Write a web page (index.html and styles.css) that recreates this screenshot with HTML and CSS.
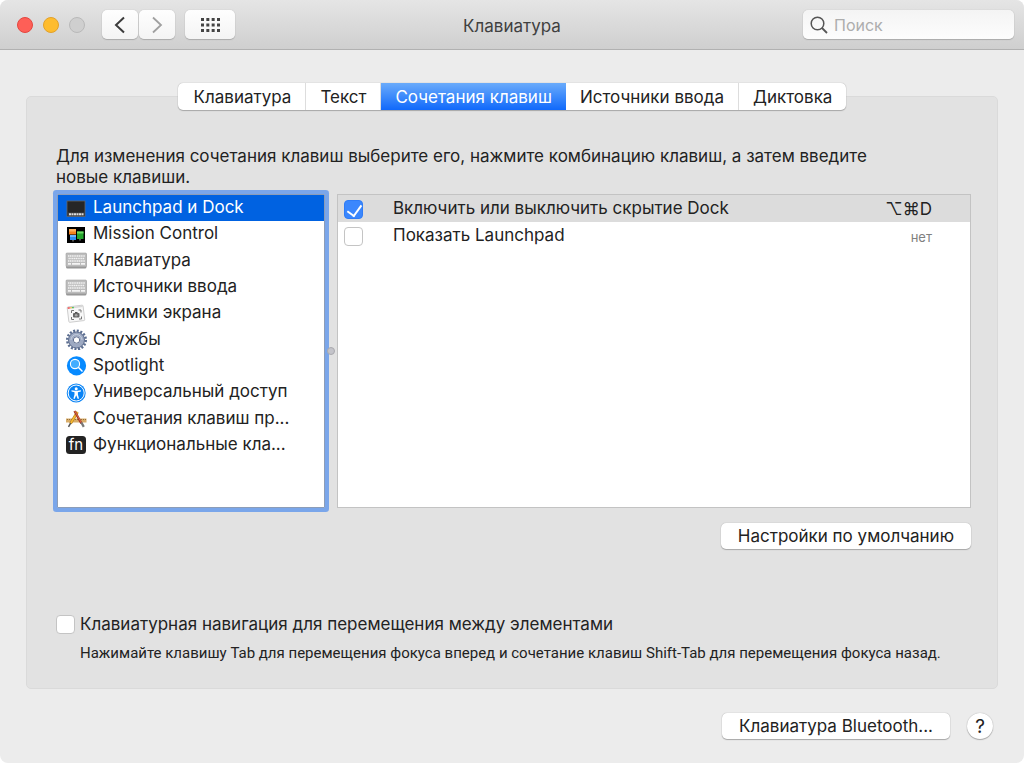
FILE: index.html
```
<!DOCTYPE html>
<html lang="ru">
<head>
    <meta charset="UTF-8">
    <meta name="viewport" content="width=device-width, initial-scale=1.0">
    <title>Клавиатура</title>
    <link rel="stylesheet" href="styles.css">
</head>
<body>

<div class="window">
    <header class="titlebar">
        <div class="titlebar-left">
            <div class="lights">
                <button class="light red" aria-label="Закрыть"></button>
                <button class="light yellow" aria-label="Свернуть"></button>
                <button class="light off" aria-label="Развернуть" disabled></button>
            </div>
            <div class="nav">
                <button class="tool nav-btn" aria-label="Назад">
                    <svg width="12" height="18" viewBox="0 0 12 18"><path d="M10 1.500 2 9l8 7.500" fill="none" stroke="#3c3c3c" stroke-width="2"/></svg>
                </button>
                <button class="tool nav-btn" aria-label="Вперед">
                    <svg width="12" height="18" viewBox="0 0 12 18"><path d="M2 1.500 10 9l-8 7.500" fill="none" stroke="#a0a0a0" stroke-width="1.800"/></svg>
                </button>
            </div>
            <button class="tool grid-btn" aria-label="Показать все">
                <svg width="20" height="14" viewBox="0 0 20 14"><path d="M1 1.500h19M1 7h19M1 12.500h19" stroke="#444" stroke-width="3" stroke-dasharray="3 2.330"/></svg>
            </button>
        </div>
        <h1 class="title">Клавиатура</h1>
        <label class="search">
            <svg width="18" height="18" viewBox="0 0 18 18"><circle cx="7.500" cy="7.500" r="6.300" fill="none" stroke="#555" stroke-width="1.500"/><path d="m12 12 5 5" stroke="#555" stroke-width="1.800"/></svg>
            <input type="text" placeholder="Поиск" aria-label="Поиск">
        </label>
    </header>

    <main class="content">
        <div class="tabs" role="tablist">
            <button role="tab">Клавиатура</button>
            <button role="tab">Текст</button>
            <button role="tab" class="active" aria-selected="true">Сочетания клавиш</button>
            <button role="tab">Источники ввода</button>
            <button role="tab">Диктовка</button>
        </div>

        <section class="panel">
            <p class="intro">Для изменения сочетания клавиш выберите его, нажмите комбинацию клавиш, а затем введите новые клавиши.</p>

            <div class="split">
                <div class="categories">
                    <ul>
                        <li><button class="selected">
                            <svg width="22" height="22" viewBox="0 0 22 22"><rect x="2" y="4" width="18" height="15.500" fill="#262626" stroke="#666" stroke-width=".8"/><path d="M2.500 15.500h17V19h-17z" fill="#454545"/><path d="M4 17.200h14.500" stroke="#ddd" stroke-width="2" stroke-dasharray="2 .5"/></svg>
                            Launchpad и Dock</button></li>
                        <li><button>
                            <svg width="22" height="22" viewBox="0 0 22 22"><rect x="2" y="4" width="18" height="16" fill="#000"/><rect x="4" y="6" width="7" height="5.500" fill="#f58220"/><path d="M4 6h7v2.500H4z" fill="#ffb15c"/><rect x="5" y="12" width="6" height="5" fill="#2d8cf0"/><path d="M5 12h6v2H5z" fill="#6bb4ff"/><rect x="12" y="8.500" width="6.500" height="7.500" fill="#23a52c"/><path d="M12 8.500h6.500v2H12z" fill="#6bd964"/><path d="M8 17v1.500M15 16v1.500" stroke="#aaa"/></svg>
                            Mission Control</button></li>
                        <li><button>
                            <svg width="22" height="22" viewBox="0 0 22 22"><rect x="1" y="4" width="20.500" height="15.500" rx="1.500" fill="#969696"/><rect x="1" y="4" width="20.500" height="13.800" rx="1" fill="#bcbcbc" stroke="#a4a4a4" stroke-width=".6"/><path d="M3 7h17M3.500 9.500h16M3 12h17" stroke="#f4f4f4" stroke-width="1.700" stroke-dasharray="1.300 .5"/><path d="M3 14.800h3m1 0h8m1 0h4" stroke="#f4f4f4" stroke-width="1.700"/></svg>
                            Клавиатура</button></li>
                        <li><button>
                            <svg width="22" height="22" viewBox="0 0 22 22"><rect x="1" y="4" width="20.500" height="15.500" rx="1.500" fill="#969696"/><rect x="1" y="4" width="20.500" height="13.800" rx="1" fill="#bcbcbc" stroke="#a4a4a4" stroke-width=".6"/><path d="M3 7h17M3.500 9.500h16M3 12h17" stroke="#f4f4f4" stroke-width="1.700" stroke-dasharray="1.300 .5"/><path d="M3 14.800h3m1 0h8m1 0h4" stroke="#f4f4f4" stroke-width="1.700"/></svg>
                            Источники ввода</button></li>
                        <li><button>
                            <svg width="22" height="22" viewBox="0 0 22 22"><g transform="rotate(-7 11 12)"><rect x="3" y="4" width="16" height="15.500" rx="1" fill="#f7f7f7" stroke="#c5c5c5" stroke-width=".8"/><path d="M3.400 4.400h15.200V6H3.400z" fill="#d8d8d8"/><path d="M3.500 5.200h2" stroke="#f33" stroke-width="1.400"/><path d="M6 5.200h1.500" stroke="#fb3" stroke-width="1.400"/><path d="M8 5.200h1.500" stroke="#3b4" stroke-width="1.400"/></g><path d="M6.500 11V8.500H9m4.500-.5H16v2.500m.5 4V17H14m-5 .5H6.500V15" fill="none" stroke="#777"/><rect x="8" y="11" width="6.500" height="4.500" rx="1" fill="#666"/><path d="M10 10.500h2.500" stroke="#555"/><circle cx="11.200" cy="13.200" r="1.300" fill="#aaa"/></svg>
                            Снимки экрана</button></li>
                        <li><button>
                            <svg width="22" height="22" viewBox="0 0 22 22"><circle cx="11.500" cy="12" r="9.200" fill="none" stroke="#5a6d90" stroke-width="2.600" stroke-dasharray="2 1.612"/><circle cx="11.500" cy="12" r="5.800" fill="none" stroke="#9da9c2" stroke-width="4.800"/><circle cx="11.500" cy="12" r="8" fill="none" stroke="#5f6e8e"/><circle cx="11.500" cy="12" r="3.200" fill="#fff" stroke="#5f6e8e"/><path d="M6 12a5.500 5.500 0 0 1 11 0" fill="none" stroke="#c4cede"/></svg>
                            Службы</button></li>
                        <li><button>
                            <svg width="22" height="22" viewBox="0 0 22 22"><circle cx="11.500" cy="11.800" r="9.600" fill="#078aff"/><circle cx="10" cy="10" r="4.600" fill="#42adff" stroke="#fff" stroke-width="1.100"/><path d="m13.300 13.300 4.200 4.200" stroke="#fff" stroke-width="1.500"/></svg>
                            Spotlight</button></li>
                        <li><button>
                            <svg width="22" height="22" viewBox="0 0 22 22"><circle cx="11.200" cy="12" r="9.500" fill="#0a84f5"/><circle cx="11.200" cy="12" r="8" fill="none" stroke="#fff"/><circle cx="11.200" cy="7.700" r="1.500" fill="#fff"/><path d="M6.500 9.300 10 9.800h2.400l3.500-.5v1.300l-3 .6v2.400l1.100 4-1.200.4-1.600-3.700L9.600 18l-1.200-.4 1.100-4v-2.400l-3-.6z" fill="#fff"/></svg>
                            Универсальный доступ</button></li>
                        <li><button>
                            <svg width="22" height="22" viewBox="0 0 22 22"><path d="M1 11.500h20.500v4H1z" fill="#d8ad69"/><path d="M2 12.500h19" stroke="#96703b" stroke-dasharray="1 1"/><path d="M12.500 5 5.500 16.500" stroke="#b47a13" stroke-width="2.700"/><path d="M12.500 5 5.500 16.500" stroke="#f4b936" stroke-width="1.600"/><path d="m5.700 16-2.200 3.800" stroke="#555" stroke-width="1.500"/><path d="m9.500 4 7 12.500" stroke="#a03420" stroke-width="2.400"/><path d="m9.800 4 7 12.500" stroke="#e97958" stroke-width=".8"/><path d="m16.300 15.500 2.500 4.300" stroke="#777" stroke-width="2.300"/></svg>
                            Сочетания клавиш пр...</button></li>
                        <li><button>
                            <svg width="22" height="22" viewBox="0 0 22 22"><rect x="1" y="3" width="20" height="18" rx="3.500" fill="#232323"/><text x="11" y="17" text-anchor="middle" class="fn">fn</text></svg>
                            Функциональные кла...</button></li>
                    </ul>
                </div>

                <div class="divider"><span class="grip"></span></div>

                <div class="shortcuts">
                    <table>
                        <tbody>
                            <tr class="selected">
                                <td class="check"><input type="checkbox" id="hide-dock" checked></td>
                                <td><label for="hide-dock">Включить или выключить скрытие Dock</label></td>
                                <td class="key">⌥⌘D</td>
                            </tr>
                            <tr>
                                <td class="check"><input type="checkbox" id="show-launchpad"></td>
                                <td><label for="show-launchpad">Показать Launchpad</label></td>
                                <td class="key none">нет</td>
                            </tr>
                        </tbody>
                    </table>
                </div>
            </div>

            <div class="defaults">
                <button class="push">Настройки по умолчанию</button>
            </div>

            <div class="navigation">
                <input type="checkbox" id="kbd-nav" aria-describedby="kbd-hint">
                <label for="kbd-nav">Клавиатурная навигация для перемещения между элементами</label>
                <p class="hint" id="kbd-hint">Нажимайте клавишу Tab для перемещения фокуса вперед и сочетание клавиш Shift-Tab для перемещения фокуса назад.</p>
            </div>
        </section>
    </main>

    <footer class="footer">
        <button class="push">Клавиатура Bluetooth...</button>
        <button class="help" aria-label="Справка">?</button>
    </footer>
</div>

</body>
</html>
```
FILE: styles.css
```
* { box-sizing: border-box; margin: 0; padding: 0; }
body { background: #fff; color: #222; font-family: Inter, "Noto Sans", sans-serif; font-size: 17px; line-height: 21px; }
button, input { font: inherit; color: inherit; }
button { border: none; }
svg { display: block; flex: none; }

.window { display: flex; flex-direction: column; min-height: 100vh; background: #ececec; border-radius: 8px; overflow: hidden; }

/* title bar */
.titlebar { display: grid; grid-template-columns: 1fr auto 1fr; align-items: center; height: 50px; padding: 0 10px; background: linear-gradient(#e5e5e5, #cfcfcf); border-bottom: 1px solid #b1b1b1; }
.titlebar-left { display: flex; align-items: center; }
.lights { display: flex; gap: 10px; margin: 0 17px 0 7px; }
.light { width: 16px; height: 16px; border-radius: 50%; border: 1px solid; }
.red { background: #fe5f57; border-color: #e4463f; }
.yellow { background: #febc2e; border-color: #e2a12a; }
.off { background: #cfcfcf; border-color: #b9b9b9; }
.tool { display: flex; align-items: center; justify-content: center; height: 29px; border-radius: 5px; background: linear-gradient(#fefefe, #f4f4f4); box-shadow: 0 0 1px #aaa, 0 1px 1px #aaa; }
.nav { display: flex; gap: 1px; margin-right: 10px; }
.nav-btn { width: 36px; }
.grid-btn { width: 50px; }
.title { padding-top: 3px; font-size: 17px; font-weight: 400; color: #404040; }
.search { display: flex; align-items: center; gap: 6px; justify-self: end; width: 211px; height: 29px; padding: 0 7px; border-radius: 5px; background: linear-gradient(#f4f4f4, #fdfdfd); box-shadow: 0 0 1px #aaa, 0 1px 1px #aaa; }
.search input { flex: 1; min-width: 0; padding-top: 2px; border: none; outline: none; background: none; font-size: 16px; }
.search input::placeholder { color: #adadad; }

/* tabs and panel */
.content { padding: 33px 26px 0; }
.tabs { position: relative; display: flex; width: max-content; height: 27px; margin: 0 auto -14px; border-radius: 5px; background: #fff; box-shadow: 0 0 1px #999, 0 1px 1px #aaa; overflow: hidden; }
.tabs button { padding: 2px 14px 0; background: none; border-right: 1px solid #ddd; }
.tabs button:first-child { padding-left: 16px; }
.tabs button:last-child { border-right: none; }
.tabs .active { background: linear-gradient(#6aabfb, #1069fb); color: #fff; border-right: none; }
.panel { padding: 49px 26px 24px 29px; border: 1px solid #dadada; border-radius: 5px; background: #e2e2e2; }
.intro { max-width: 830px; margin-bottom: 6px; }

.split { display: grid; grid-template-columns: 268px 12px 1fr; height: 314px; margin-left: 1px; }
.categories { background: #fff; border: 1px solid #8c9db8; box-shadow: 0 0 0 4px #7aa6ea; border-radius: 1px; }
.categories ul { display: grid; grid-auto-rows: 1fr; height: 263px; list-style: none; }
.categories button { display: flex; align-items: center; gap: 6px; width: 100%; height: 100%; padding: 0 7px 1px; background: none; text-align: left; white-space: nowrap; }
.categories .selected { background: #0062e1; color: #fff; }
.fn { font-size: 15px; fill: #fff; }
.divider { display: flex; align-items: center; justify-content: center; }
.grip { width: 8px; height: 8px; border: 1px solid #a9a9ae; border-radius: 50%; background: #c4c4ca; }
.shortcuts { background: #fff; border: 1px solid #c3c3c3; }
table { width: 100%; border-collapse: collapse; }
tr { height: 27px; }
.shortcuts .selected { background: #dcdcdc; }
.check { width: 55px; padding: 2px 0 0 6px; }
.key { width: 100px; padding: 1px 38px 0 0; text-align: right; }
.none { padding-top: 4px; font-size: 13px; color: #808080; }

input[type="checkbox"] { display: block; flex: none; appearance: none; width: 19px; height: 19px; border: 1px solid #c4c4c4; border-radius: 4px; background: #fff; }
input[type="checkbox"]:checked { position: relative; border-color: #2f7cf6; background: #3b87fd; }
input[type="checkbox"]:checked::after { content: ""; position: absolute; left: 5px; top: 1px; width: 7px; height: 12px; border: solid #fff; border-width: 0 2px 2px 0; transform: rotate(36deg); }

.push { height: 26px; padding: 0 17px; border-radius: 5px; background: #fff; box-shadow: 0 0 1px #999, 0 1px 1px #aaa; }
.defaults { display: flex; justify-content: flex-end; margin: 15px 0 65px; }
.navigation { display: grid; grid-template-columns: 19px 1fr; column-gap: 5px; row-gap: 8px; align-items: center; }
.hint { grid-column: 2; font-family: Roboto, "Noto Sans", sans-serif; font-size: 15px; }

/* footer */
.footer { display: flex; align-items: center; justify-content: flex-end; gap: 17px; padding: 24px 31px; }
.help { width: 26px; height: 26px; border-radius: 50%; background: #fff; box-shadow: 0 0 1px #999, 0 1px 1px #aaa; font-size: 19px; }
```
